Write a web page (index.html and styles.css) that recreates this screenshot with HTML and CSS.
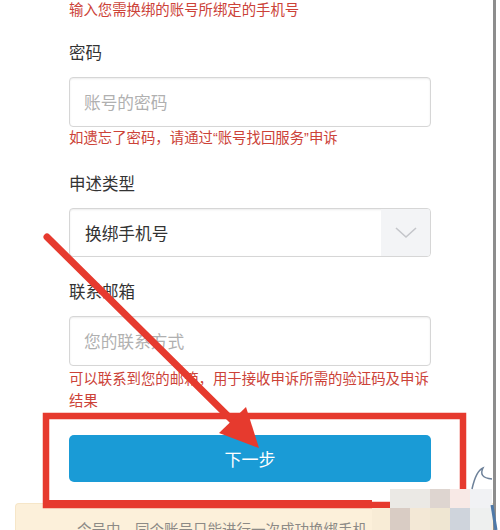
FILE: index.html
```html
<!DOCTYPE html>
<html lang="zh-CN">
<head>
<meta charset="utf-8">
<title>申诉</title>
<link rel="stylesheet" href="styles.css">
</head>
<body>
<div class="page">
  <div class="form">
    <p class="hint top-hint">输入您需换绑的账号所绑定的手机号</p>
    <div class="label first">密码</div>
    <div class="input"><span class="placeholder ph1">账号的密码</span></div>
    <p class="hint">如遗忘了密码，请通过<span class="q">“</span>账号找回服务<span class="q">”</span>申诉</p>
    <div class="label">申述类型</div>
    <div class="select">
      <span class="value">换绑手机号</span>
      <span class="caret">
        <svg width="22" height="12" viewBox="0 0 22 12"><path d="M1 1 L11 10 L21 1" fill="none" stroke="#c4c6ca" stroke-width="1.6"/></svg>
      </span>
    </div>
    <div class="label mail">联系邮箱</div>
    <div class="input"><span class="placeholder">您的联系方式</span></div>
    <p class="hint multi">可以联系到您的邮箱，用于接收申诉所需的验证码及申诉结果</p>
    <div class="button">下一步</div>
  </div>
  <div class="notice"><span>令号中，同个账号只能进行一次成功换绑手机</span></div>
</div>
<svg class="overlay" width="500" height="530" viewBox="0 0 500 530">
  <rect x="46" y="416" width="417" height="89" fill="none" stroke="#e63a2e" stroke-width="6.5"/>
  <line x1="46" y1="504" x2="372" y2="504" stroke="#e63a2e" stroke-width="8"/>
  <line x1="47" y1="237" x2="234" y2="422" stroke="#e63a2e" stroke-width="7" stroke-linecap="round"/>
  <polygon points="219,433 246,407 259,448" fill="#e63a2e"/>
  <g class="mosaic">
    <rect x="390" y="489" width="40" height="19" fill="#ebe9e5"/>
    <rect x="430" y="489" width="20" height="19" fill="#ded5d0"/>
    <rect x="450" y="489" width="20" height="19" fill="#f8e9e6"/>
    <rect x="470" y="489" width="22" height="19" fill="#f1f2f4"/>
    <rect x="372" y="508" width="18" height="22" fill="#f8ecd6"/>
    <rect x="390" y="508" width="20" height="22" fill="#d9ccc4"/>
    <rect x="410" y="508" width="20" height="22" fill="#f3e8d6"/>
    <rect x="430" y="508" width="20" height="22" fill="#efe6d2"/>
    <rect x="450" y="508" width="20" height="22" fill="#cfd4dc"/>
    <rect x="470" y="508" width="22" height="22" fill="#eef0ef"/>
  </g>
  <path d="M472 489 C474 480 478 470 483 468 C480 474 482 478 492 479" fill="none" stroke="#6d8199" stroke-width="1.5"/>
  <path d="M492 505 L496 530" stroke="#4e79a8" stroke-width="3"/>
</svg>
</body>
</html>
```

FILE: styles.css
```css
html, body {
  margin: 0;
  padding: 0;
  background: #ffffff;
}
body {
  width: 500px;
  height: 530px;
  overflow: hidden;
  position: relative;
  font-family: "Noto Sans CJK SC", "Noto Sans", sans-serif;
}
.page {
  width: 493px;
  height: 530px;
  border-right: 3px solid #8d8d8d;
  box-sizing: content-box;
  overflow: hidden;
}
.form {
  margin-left: 69px;
  width: 362px;
}
.hint {
  margin: 0;
  color: #cc4238;
  font-size: 14.4px;
  line-height: 20px;
}
.hint .q {
  font-family: "Liberation Sans", sans-serif;
}
.top-hint {
  line-height: 17px;
}
.hint.multi {
  line-height: 22px;
  margin-top: 1px;
}
.label {
  margin-top: 23px;
  color: #333333;
  font-size: 16.5px;
  line-height: 24px;
}
.label.mail {
  margin-top: 22px;
}
.input, .select {
  margin-top: 13px;
  height: 50px;
  box-sizing: border-box;
  border: 1px solid #d6d6d6;
  border-radius: 4px;
  box-shadow: inset 0 1px 2px rgba(0,0,0,0.08);
  display: flex;
  align-items: center;
  background: #ffffff;
}
.placeholder {
  padding-left: 14px;
  color: #b0b0b0;
  font-size: 16.7px;
}
.select {
  height: 49px;
  overflow: hidden;
}
.select .value {
  flex: 1;
  padding-left: 15px;
  color: #333333;
  font-size: 16.7px;
}
.select .caret {
  width: 49px;
  height: 100%;
  background: #f3f4f6;
  display: flex;
  align-items: center;
  justify-content: center;
}
.button {
  margin-top: 24px;
  height: 47px;
  background: #1a9bd6;
  border-radius: 5px;
  color: #ffffff;
  font-size: 17px;
  display: flex;
  align-items: center;
  justify-content: center;
}
.notice {
  margin: 21px 0 0 15px;
  height: 60px;
  background: #fcf0da;
  border-radius: 4px 0 0 0;
  border-top: 1px solid #f6e6c8;
  border-left: 1px solid #f6e6c8;
  padding-left: 61px;
  padding-top: 15px;
  box-sizing: border-box;
  color: #8c8a86;
  font-size: 14.5px;
  line-height: 20px;
}
.overlay {
  position: absolute;
  left: 0;
  top: 0;
}
```
